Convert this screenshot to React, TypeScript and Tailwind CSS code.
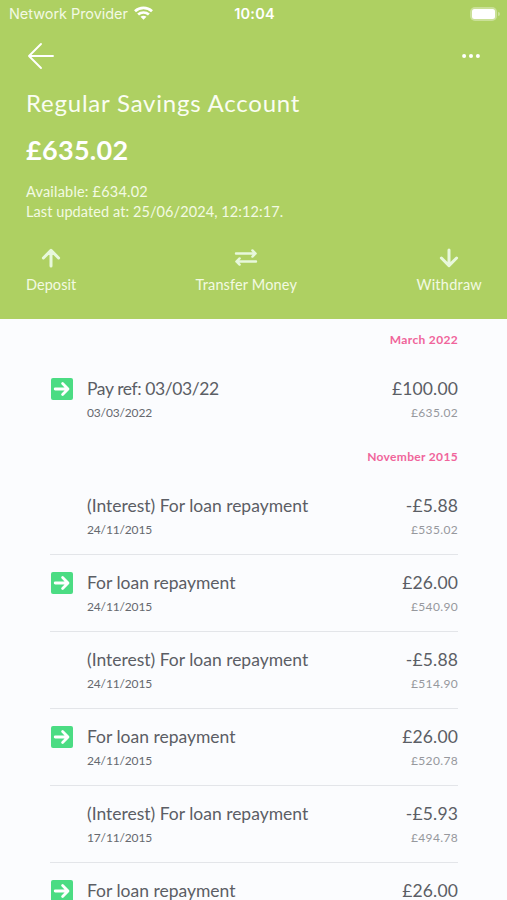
import React from 'react';

interface Transaction {
  id: number;
  title: string;
  date?: string;
  amount: string;
  balance?: string;
  incoming: boolean;
}

interface TransactionGroup {
  month: string;
  items: Transaction[];
}

const groups: TransactionGroup[] = [
  {
    month: 'March 2022',
    items: [
      { id: 1, title: 'Pay ref: 03/03/22', date: '03/03/2022', amount: '£100.00', balance: '£635.02', incoming: true },
    ],
  },
  {
    month: 'November 2015',
    items: [
      { id: 2, title: '(Interest) For loan repayment', date: '24/11/2015', amount: '-£5.88', balance: '£535.02', incoming: false },
      { id: 3, title: 'For loan repayment', date: '24/11/2015', amount: '£26.00', balance: '£540.90', incoming: true },
      { id: 4, title: '(Interest) For loan repayment', date: '24/11/2015', amount: '-£5.88', balance: '£514.90', incoming: false },
      { id: 5, title: 'For loan repayment', date: '24/11/2015', amount: '£26.00', balance: '£520.78', incoming: true },
      { id: 6, title: '(Interest) For loan repayment', date: '17/11/2015', amount: '-£5.93', balance: '£494.78', incoming: false },
      { id: 7, title: 'For loan repayment', amount: '£26.00', incoming: true },
    ],
  },
];

function StatusBar() {
  return (
    <div className="grid h-7 grid-cols-3 items-center pl-[9px] pr-[7px] font-['Inter',sans-serif] text-[14.5px]">
      <div className="flex items-center gap-[6px] whitespace-nowrap text-[#f3f9e4]">
        <span className="-tracking-[0.05px]">Network Provider</span>
        <svg width="19" height="14" viewBox="0 0 19 14" fill="none" stroke="#fff" strokeWidth="2.7" className="-mt-[2px] shrink-0">
          <path d="M1 5.2C5.8 .7 13.2 .7 18 5.2" />
          <path d="M4.1 8.6C7.2 5.8 11.8 5.8 14.9 8.6" />
          <path d="M9.5 13.8L6.5 10.8C8.2 9.3 10.8 9.3 12.5 10.8Z" fill="#fff" stroke="none" />
        </svg>
      </div>
      <div className="text-center font-semibold tracking-[0.2px]">10:04</div>
      <div className="flex items-center justify-end gap-px">
        <div className="h-[14px] w-[27px] rounded-[5px] bg-white/35 p-[2px]">
          <div className="h-full w-full rounded-[2.5px] bg-white" />
        </div>
        <div className="h-[4px] w-[2px] rounded-r-full bg-white/35" />
      </div>
    </div>
  );
}

function IncomingIcon() {
  return (
    <svg width="22" height="22" viewBox="0 0 22 22" fill="none">
      <rect width="22" height="22" rx="2" fill="#4bdc83" />
      <path d="M4.2 11H16.8M11.6 5.6L17 11L11.6 16.4" stroke="#fff" strokeWidth="2.8" strokeLinecap="round" strokeLinejoin="round" />
    </svg>
  );
}

function AccountHeader() {
  return (
    <div className="h-[319px] bg-[#aed062] text-white">
      <StatusBar />
      <div className="flex h-14 items-center justify-between px-[27px]">
        <button>
          <svg width="28" height="28" viewBox="0 0 28 28" fill="none" stroke="#fff" strokeWidth="1.9" strokeLinecap="round" strokeLinejoin="round">
            <path d="M26 14H2M14 2L2 14L14 26" />
          </svg>
        </button>
        <button>
          <svg width="18" height="6" viewBox="0 0 18 6" fill="#fff">
            <circle cx="2.1" cy="3" r="2" />
            <circle cx="9" cy="3" r="2" />
            <circle cx="15.9" cy="3" r="2" />
          </svg>
        </button>
      </div>
      <div className="pl-[26px] pr-[25px]">
        <h1 className="-mt-px h-10 text-[24px] leading-[40px] tracking-[0.78px] text-[#fafdf2]">Regular Savings Account</h1>
        <div className="mt-[7px] h-10 text-[27px] font-bold leading-[40px] tracking-[0.3px]">£635.02</div>
        <div className="mt-[11px] text-[14.5px] text-[#f3fae2]">
          <div className="leading-[21px] tracking-[0.2px]">Available: £634.02</div>
          <div className="leading-[19px] tracking-[0.08px]">Last updated at: 25/06/2024, 12:12:17.</div>
        </div>
        <div className="mt-[26px] flex justify-between text-[14.5px] leading-5 text-[#f3fae2]">
          <button className="flex flex-col items-center">
            <svg width="22" height="22" viewBox="0 0 22 22" fill="none" stroke="#e8f8dc" strokeWidth="3" strokeLinecap="round" strokeLinejoin="round">
              <path d="M11 19V4M3.4 11L11 3.4L18.6 11" />
            </svg>
            <span className="mt-[6px] tracking-[0.05px]">Deposit</span>
          </button>
          <button className="flex flex-col items-center">
            <svg width="24" height="22" viewBox="0 0 24 22" fill="none" stroke="#e8f8dc" strokeWidth="2.4" strokeLinecap="round" strokeLinejoin="round">
              <path d="M2 6.5H21.5M18.4 3.4L21.6 6.5L18.4 9.6M22 14.5H2.5M5.6 11.4L2.4 14.5L5.6 17.6" />
            </svg>
            <span className="mt-[6px] tracking-[0.15px]">Transfer Money</span>
          </button>
          <button className="flex flex-col items-center">
            <svg width="22" height="22" viewBox="0 0 22 22" fill="none" stroke="#e8f8dc" strokeWidth="3" strokeLinecap="round" strokeLinejoin="round">
              <path d="M11 3V18M3.4 11L11 18.6L18.6 11" />
            </svg>
            <span className="mt-[6px] tracking-[0.25px]">Withdraw</span>
          </button>
        </div>
      </div>
    </div>
  );
}

function TransactionRow({ item }: { item: Transaction }) {
  const isReference = item.title.startsWith('Pay ref');

  return (
    <div className="flex h-[77px] border-b border-[#e3e5e9] pt-[15px] last:border-b-0">
      <div className="w-[37px] pl-px pt-[2px]">{item.incoming && <IncomingIcon />}</div>
      <div className="flex-1">
        <div className={`text-[17.5px] leading-[26px] text-[#5b5e65] ${isReference ? '-tracking-[0.4px]' : '-tracking-[0.01px]'}`}>
          {item.title}
        </div>
        {item.date && <div className="text-[12px] leading-[22px] -tracking-[0.15px] text-[#66696f]">{item.date}</div>}
      </div>
      <div className="text-right">
        <div className="text-[17.5px] leading-[26px] tracking-[0.15px] text-[#5b5e65]">{item.amount}</div>
        {item.balance && <div className="text-[12px] leading-[22px] tracking-[0.35px] text-[#96989d]">{item.balance}</div>}
      </div>
    </div>
  );
}

export default function App() {
  return (
    <div className="h-[900px] w-[507px] overflow-hidden bg-[#fbfcfe] font-['Lato','Noto_Sans',sans-serif]">
      <AccountHeader />
      <div className="pl-[50px] pr-[49px] pt-px">
        {groups.map((group) => (
          <div key={group.month}>
            <div className="h-10 text-right text-[12px] font-bold leading-[40px] tracking-[0.33px] text-[#f0659b]">{group.month}</div>
            <div className="-mb-px pt-px">
              {group.items.map((item) => (
                <TransactionRow key={item.id} item={item} />
              ))}
            </div>
          </div>
        ))}
      </div>
    </div>
  );
}
